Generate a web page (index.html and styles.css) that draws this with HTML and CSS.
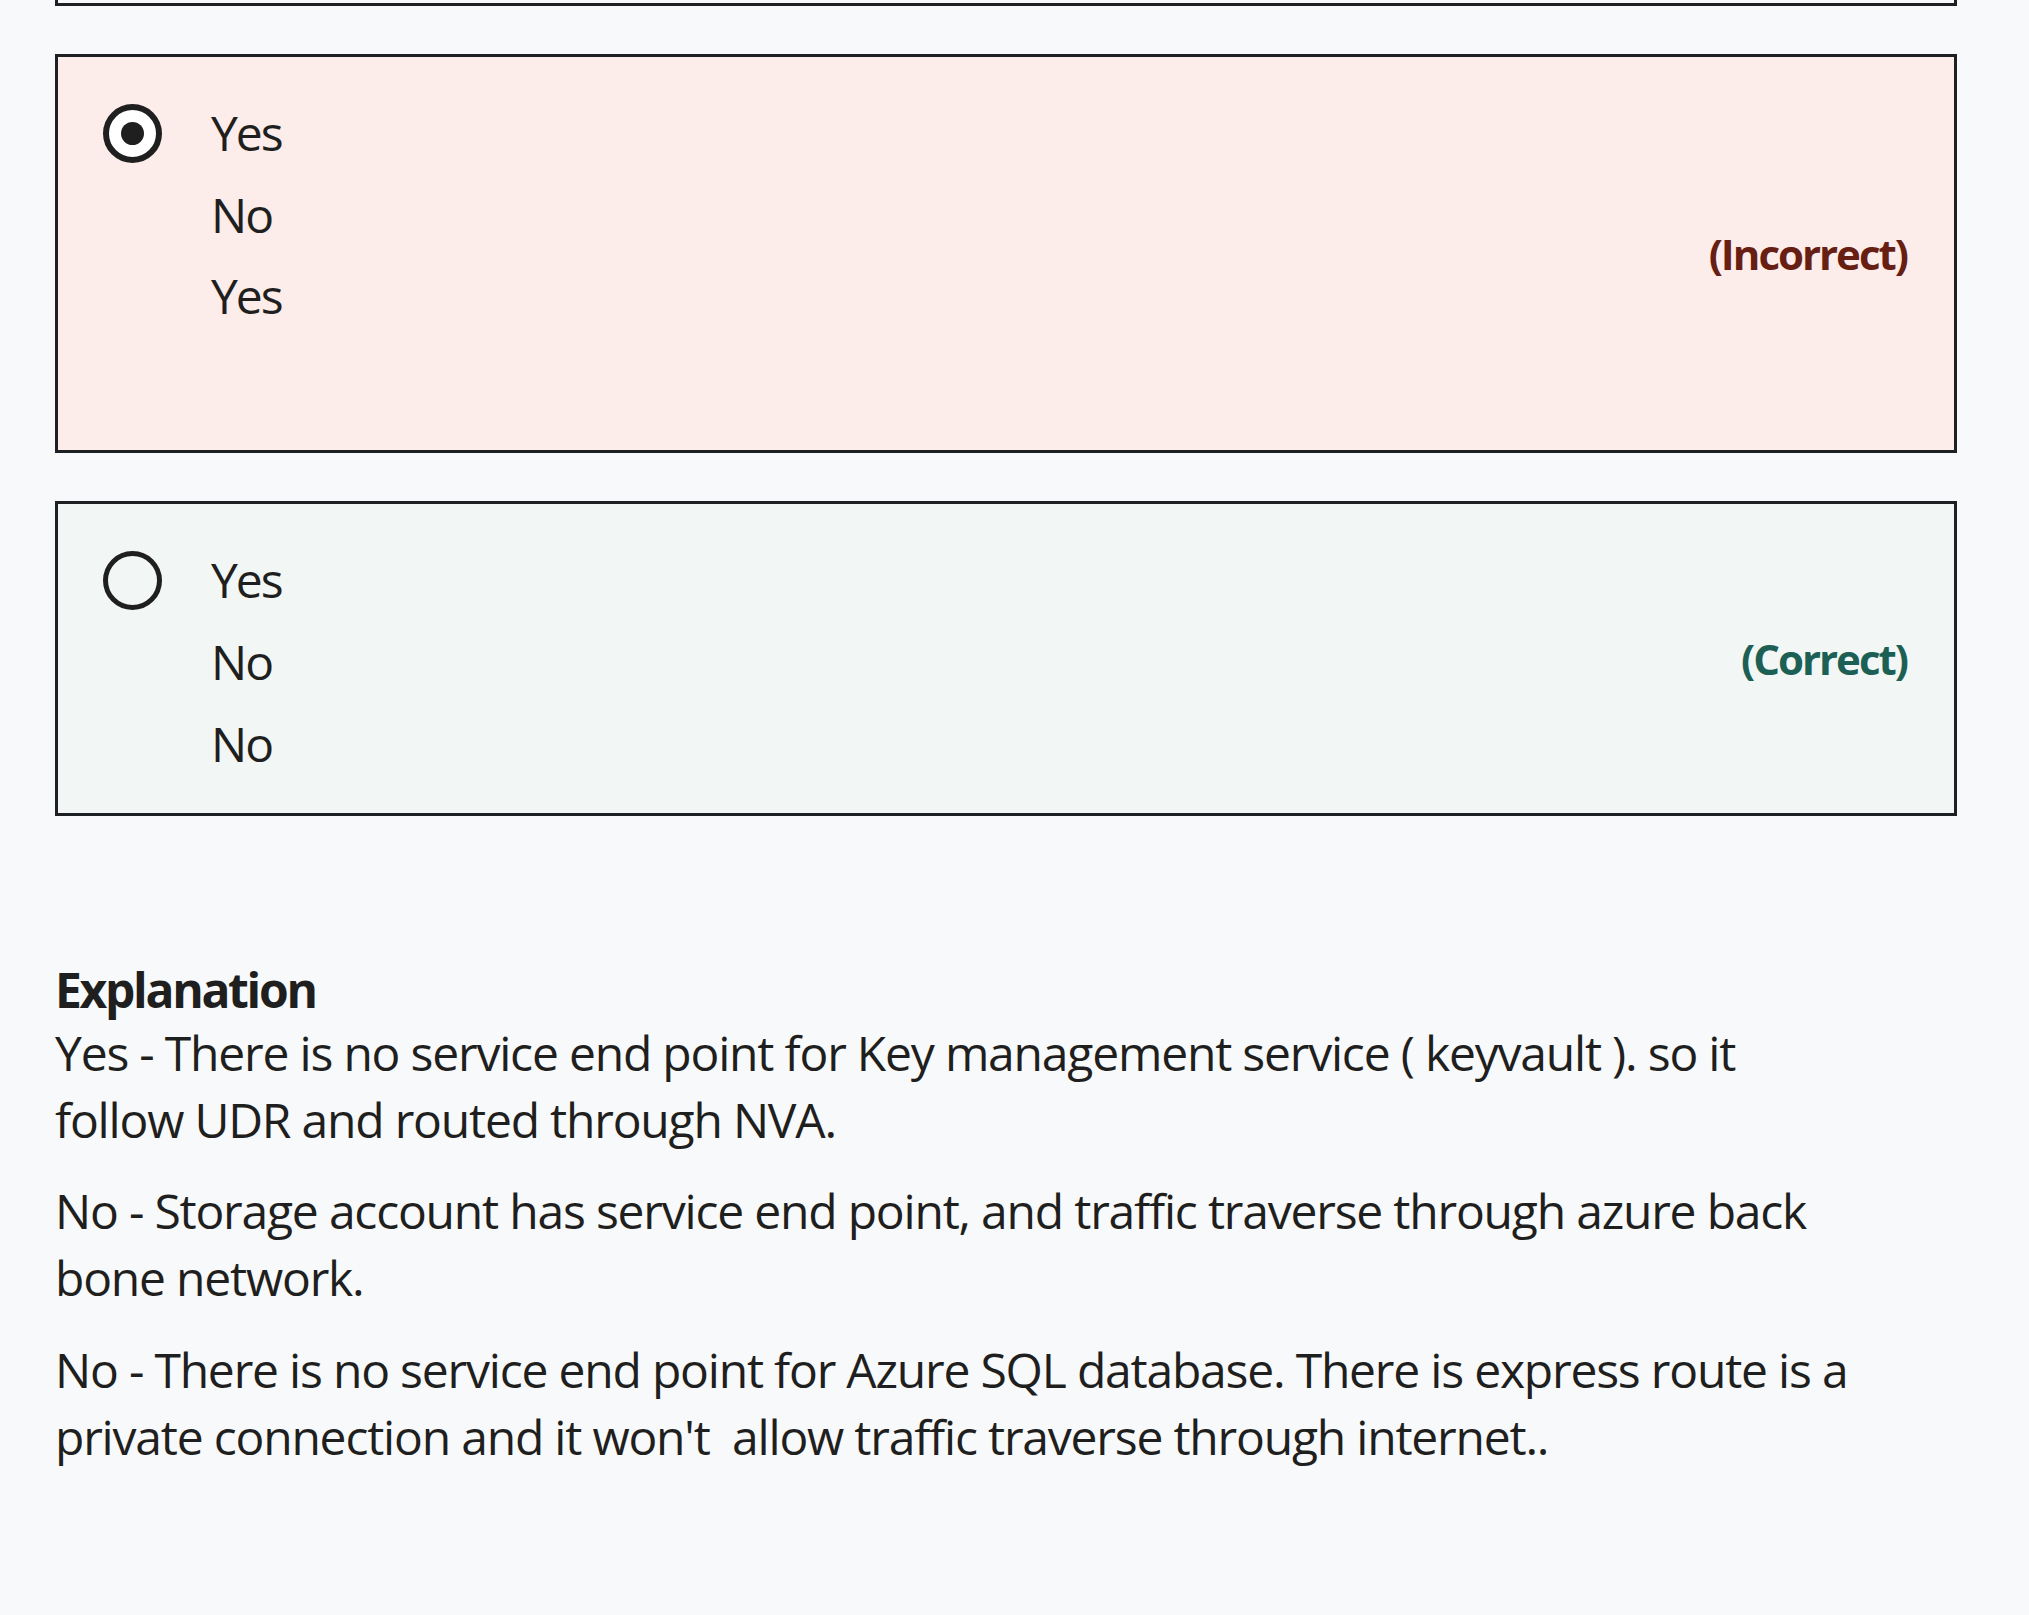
FILE: index.html
```html
<!DOCTYPE html>
<html lang="en">
<head>
<meta charset="utf-8">
<title>Answer review</title>
<link rel="stylesheet" href="styles.css">
</head>
<body>
<div class="page">
  <div class="answer answer--cut"></div>

  <div class="answer answer--incorrect">
    <span class="radio radio--checked"></span>
    <div class="options">
      <div class="opt">Yes</div>
      <div class="opt">No</div>
      <div class="opt">Yes</div>
      <div class="opt opt--blank"></div>
    </div>
    <div class="verdict verdict--bad">(Incorrect)</div>
  </div>

  <div class="answer answer--correct">
    <span class="radio"></span>
    <div class="options">
      <div class="opt">Yes</div>
      <div class="opt">No</div>
      <div class="opt">No</div>
    </div>
    <div class="verdict verdict--good">(Correct)</div>
  </div>

  <section class="explanation">
    <h3 class="explanation__title">Explanation</h3>
    <p class="explanation__text">Yes - There is no service end point for Key management service ( keyvault ). so it follow UDR and routed through NVA.</p>
    <p class="explanation__text">No - Storage account has service end point, and traffic traverse through azure back bone network.</p>
    <p class="explanation__text">No - There is no service end point for Azure SQL database. There is express route is a private connection and it won't&nbsp; allow traffic traverse through internet..</p>
  </section>
</div>
</body>
</html>
```

FILE: styles.css
```css
html, body {
  margin: 0;
  padding: 0;
  background: #f8f9fb;
}

body {
  font-family: "Open Sans", "Noto Sans", "Liberation Sans", sans-serif;
  color: #1f1f20;
}

.page {
  margin-left: 55px;
  width: 1902px;
}

.answer {
  display: flex;
  align-items: flex-start;
  border: 3px solid #1f2023;
  padding: 35px 47px 29px 45px;
  margin-bottom: 48px;
}

.answer--cut {
  border-top: 0;
  height: 3px;
  padding: 0;
}

.answer--incorrect {
  background: #fcecea;
}

.answer--correct {
  background: #f2f6f5;
}

.radio {
  flex: none;
  box-sizing: border-box;
  width: 59px;
  height: 59px;
  margin-top: 12px;
  border: 5px solid #1f1f20;
  border-radius: 50%;
  display: flex;
  align-items: center;
  justify-content: center;
}

.radio--checked {
  border-width: 6px;
  background: #ffffff;
}

.radio--checked::after {
  content: "";
  width: 23px;
  height: 23px;
  border-radius: 50%;
  background: #1f1f20;
}

.options {
  margin-left: 49px;
}

.opt {
  font-size: 48px;
  line-height: 81.6px;
  letter-spacing: -2px;
}

.opt--blank {
  height: 84.6px;
}

.verdict {
  margin-left: auto;
  margin-bottom: 6px;
  align-self: center;
  font-weight: 700;
  font-size: 42px;
  letter-spacing: -2px;
}

.verdict--bad {
  color: #661f12;
}

.verdict--good {
  color: #1c5f54;
}

.explanation {
  margin-top: 145px;
  width: 1815px;
}

.explanation__title {
  margin: 0;
  font-size: 48px;
  font-weight: 700;
  line-height: 57.6px;
  letter-spacing: -2.3px;
}

.explanation__text {
  margin: 0 0 24px;
  font-size: 48px;
  line-height: 67.2px;
  letter-spacing: -1.2px;
}
```
